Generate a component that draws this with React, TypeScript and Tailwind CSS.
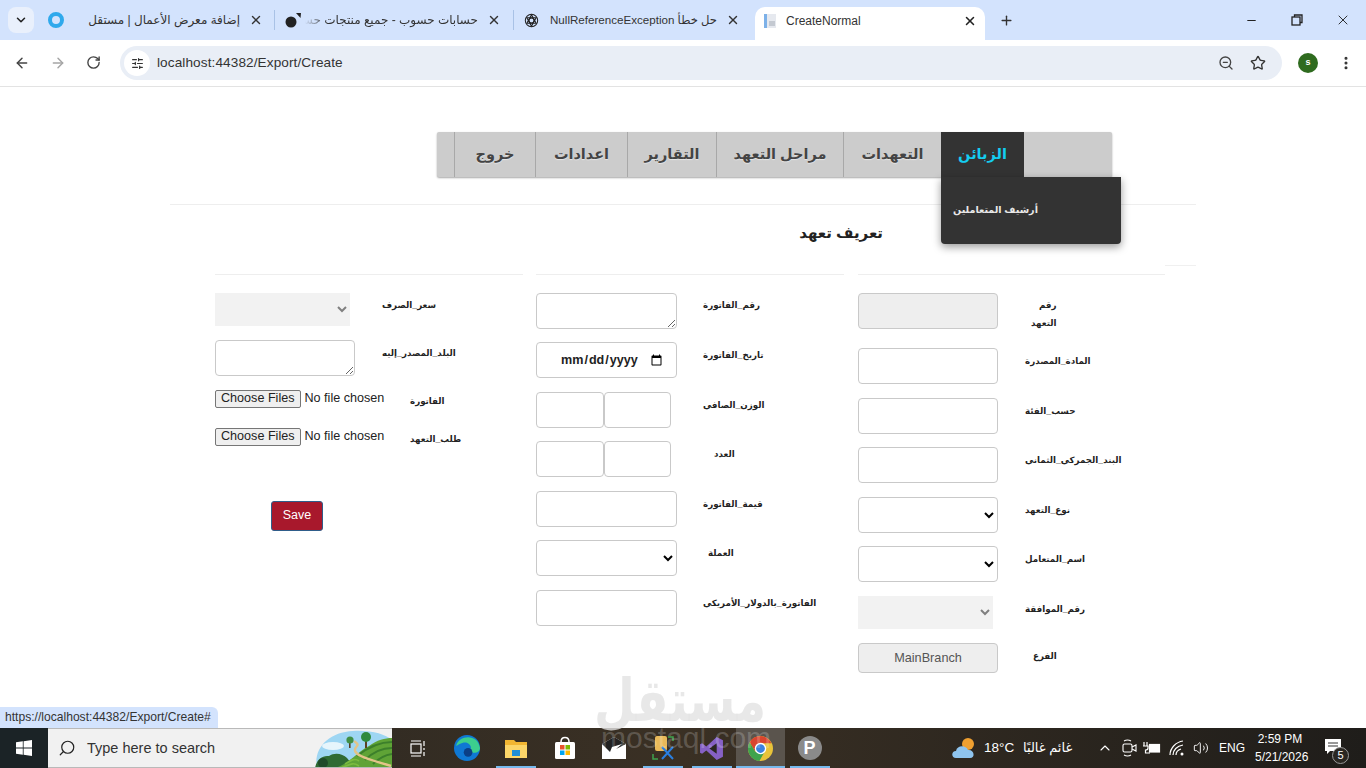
import type { ReactNode } from "react";
import {
  ArrowLeft,
  ArrowRight,
  ChevronDown,
  ChevronUp,
  EllipsisVertical,
  Minus,
  Plus,
  RotateCw,
  Search,
  SlidersHorizontal,
  Star,
  Volume2,
  X,
  ZoomOut,
} from "lucide-react";

const inputCls = "block h-[36px] border border-[#c9c9c9] rounded-[4px] bg-white";
const labelCls = "text-[8.7px] font-bold text-[#222] leading-[18px] whitespace-nowrap";

function Tab({ title, icon, iconCls, closeCls, widthCls, titleCls }: {
  title: string;
  icon: ReactNode;
  iconCls: string;
  closeCls: string;
  widthCls: string;
  titleCls?: string;
}) {
  return (
    <div className={`flex items-center h-[40px] ${widthCls}`}>
      <div className={`w-[19px] flex justify-center shrink-0 ${iconCls}`}>{icon}</div>
      <div dir="rtl" className={`flex-1 min-w-0 overflow-hidden whitespace-nowrap text-[#333] mr-[9px] ${titleCls ?? "text-[12px]"}`}>
        {title}
      </div>
      <X className={`w-[14px] h-[14px] text-[#333] shrink-0 ${closeCls}`} strokeWidth={2.4} />
    </div>
  );
}

function BrowserChrome() {
  return (
    <div className="shrink-0">
      {/* Tab strip */}
      <div className="h-[40px] bg-[#d3e3fd] flex items-center">
        <div className="ml-[8px] w-[26px] h-[26px] rounded-[8px] bg-[#e9f0fc] flex items-center justify-center">
          <ChevronDown className="w-[14px] h-[14px] text-[#222]" strokeWidth={2.6} />
        </div>
        <div className="ml-[10px] flex items-center">
          <Tab
            widthCls="w-[230px]"
            iconCls="ml-[2px]"
            closeCls="mr-[11px]"
            title="إضافة معرض الأعمال | مستقل"
            icon={<div className="w-[16px] h-[16px] rounded-full border-[4px] border-[#2fa9ec]" />}
          />
          <div className="w-px h-[20px] bg-[#a9c2e6]" />
          <Tab
            widthCls="w-[238px]"
            iconCls="ml-[8px]"
            closeCls="mr-[12px]"
            titleCls="text-[12px] ml-[3px] [mask-image:linear-gradient(to_right,transparent,black_22px)]"
            title="حسابات حسوب - جميع منتجات حسوب"
            icon={
              <svg viewBox="0 0 18 18" className="w-[18px] h-[18px]">
                <circle cx="7" cy="11" r="5.5" fill="#222" />
                <path d="M12 2 L17 2 L16.5 7 Z" fill="#222" />
              </svg>
            }
          />
          <div className="w-px h-[20px] bg-[#a9c2e6]" />
          <Tab
            widthCls="w-[241px]"
            iconCls="ml-[8px]"
            closeCls="mr-[15px]"
            titleCls="text-[11.6px]"
            title="حل خطأ NullReferenceException"
            icon={
              <svg viewBox="0 0 16 16" className="w-[15px] h-[15px]" fill="none" stroke="#222" strokeWidth="1.1">
                <circle cx="8" cy="8" r="6.6" />
                <path d="M8 2 L13 11 L3 11 Z M8 14 L3 5 L13 5 Z" />
                <circle cx="8" cy="8" r="2.6" />
              </svg>
            }
          />
        </div>
        {/* Active tab */}
        <div className="mt-[7px] pb-[6px] w-[230px] h-[33px] bg-white rounded-t-[10px] flex items-center">
          <svg viewBox="0 0 16 16" className="ml-[7px] w-[16px] h-[16px]">
            <rect x="2" y="1" width="12" height="14" fill="#e6e9ef" />
            <rect x="2" y="1" width="3" height="14" fill="#7db1e8" />
            <rect x="7" y="8" width="6" height="5" fill="#c4c9d1" />
          </svg>
          <span className="ml-[8px] text-[12px] text-[#333] flex-1">CreateNormal</span>
          <X className="mr-[8px] w-[14px] h-[14px] text-[#222]" strokeWidth={2.6} />
        </div>
        <Plus className="ml-[14px] w-[15px] h-[15px] text-[#333]" strokeWidth={2.2} />
        <div className="ml-auto flex items-center">
          <Minus className="w-[13px] h-[13px] text-[#222] mr-[33px]" />
          <svg viewBox="0 0 12 12" className="w-[12px] h-[12px] mr-[32px]" fill="none" stroke="#222" strokeWidth="1.3">
            <rect x="1" y="3" width="8" height="8" />
            <path d="M3.5 3 V1 H11 V8.5 H9" />
          </svg>
          <X className="w-[16px] h-[16px] text-[#222] mr-[15px]" strokeWidth={1.4} />
        </div>
      </div>
      {/* Toolbar */}
      <div className="h-[47px] bg-white border-b border-[#e3e3e3] flex items-start pt-[6px]">
        <ArrowLeft className="ml-[14px] mt-[9px] w-[16px] h-[16px] text-[#444]" strokeWidth={2.2} />
        <ArrowRight className="ml-[20px] mt-[9px] w-[16px] h-[16px] text-[#a5a5a5]" strokeWidth={2.2} />
        <RotateCw className="ml-[20px] mt-[9px] w-[15px] h-[15px] text-[#444]" strokeWidth={2.2} />
        <div className="ml-[19px] w-[1162px] h-[34px] rounded-full bg-[#e9eef6] flex items-center">
          <div className="ml-[4px] w-[26px] h-[26px] rounded-full bg-white flex items-center justify-center">
            <SlidersHorizontal className="w-[13px] h-[13px] text-[#333]" strokeWidth={2.2} />
          </div>
          <span className="ml-[7px] mt-[1px] text-[13.6px] text-[#333] tracking-[0.1px]">localhost:44382/Export/Create</span>
          <ZoomOut className="ml-auto w-[16px] h-[16px] text-[#444]" strokeWidth={2} />
          <Star className="ml-[16px] mr-[16px] w-[16px] h-[16px] text-[#333]" strokeWidth={2} />
        </div>
        <div className="ml-[16px] mt-[7px] w-[20px] h-[20px] rounded-full bg-[#2f6b1f] text-white text-[9px] font-bold flex items-center justify-center">
          s
        </div>
        <EllipsisVertical className="ml-[20px] mt-[9px] w-[16px] h-[16px] text-[#333]" strokeWidth={2.6} />
      </div>
    </div>
  );
}

const navItems = [
  { label: "خروج", w: "w-[81px]" },
  { label: "اعدادات", w: "w-[92px]" },
  { label: "التقارير", w: "w-[89px]" },
  { label: "مراحل التعهد", w: "w-[127px]" },
  { label: "التعهدات", w: "w-[98px]" },
];

function NavBar() {
  return (
    <div className="ml-[437px] w-[675px] h-[45px] bg-[#cccccc] rounded-[2px] shadow-[0_1px_2px_rgba(0,0,0,0.35)] flex pl-[17px]">
      {navItems.map((item) => (
        <div
          key={item.label}
          dir="rtl"
          className={`${item.w} h-full border-l border-[#a8a8a8] flex items-center justify-center text-[14.5px] font-bold text-[#444] [text-shadow:0_1px_1px_rgba(255,255,255,0.5)]`}
        >
          {item.label}
        </div>
      ))}
      <div className="relative w-[83px] h-full bg-[#333333] flex items-center justify-center text-[14.5px] font-bold text-[#14cdf0]" dir="rtl">
        الزبائن
        <div
          dir="ltr"
          className="absolute left-0 top-[45px] w-[180px] h-[67px] bg-[#333333] rounded-b-[4px] shadow-[0_3px_8px_rgba(0,0,0,0.4)] flex items-center pl-[12px] z-10"
        >
          <span dir="rtl" className="text-[9.6px] font-bold text-[#e8e8e8]">أرشيف المتعاملين</span>
        </div>
      </div>
    </div>
  );
}

function Row({ gapCls, heightCls, fieldCls, labelPad, label, children }: {
  gapCls: string;
  heightCls?: string;
  fieldCls?: string;
  labelPad?: string;
  label: ReactNode;
  children: ReactNode;
}) {
  return (
    <div className={`flex ${gapCls} ${heightCls ?? "h-[36px]"}`}>
      <div className={`shrink-0 ${fieldCls ?? "w-[167px]"}`}>{children}</div>
      <div dir="rtl" className={`${labelCls} ${labelPad ?? "mt-[4px]"}`}>{label}</div>
    </div>
  );
}

const fileCls =
  "block w-[195px] text-[12.6px] text-[#222] leading-[18px] file:h-[18px] file:px-[5px] file:mr-[4px] file:bg-[#efefef] file:border file:border-[#767676] file:rounded-[2px] file:text-[12.6px] file:leading-[15px]";

function FormColumns() {
  return (
    <div className="flex pl-[215px] mt-[8px]">
      {/* Left column */}
      <div className="w-[308px] border-t border-[#eeeeee] pt-[18px]">
        <Row gapCls="" heightCls="h-[33px]" labelPad="mt-[3px]" label="سعر_الصرف">
          <select disabled className="block w-[135px] h-[33px] bg-[#f2f2f2] text-[#808080]" />
        </Row>
        <Row gapCls="mt-[14px]" label="البلد_المصدر_إليه">
          <textarea className={`${inputCls} w-[140px]`} />
        </Row>
        <Row gapCls="mt-[13px]" heightCls="h-[18px]" fieldCls="w-[195px]" labelPad="mt-[3px]" label="الفاتورة">
          <input type="file" multiple className={fileCls} />
        </Row>
        <Row gapCls="mt-[20px]" heightCls="h-[18px]" fieldCls="w-[195px]" labelPad="mt-[3px]" label="طلب_التعهد">
          <input type="file" multiple className={fileCls} />
        </Row>
        <button className="block ml-[56px] mt-[56px] pb-[2px] w-[52px] h-[30px] bg-[#a8182c] border border-[#2f5d8a] rounded-[3px] text-white text-[12.5px]">
          Save
        </button>
      </div>
      {/* Middle column */}
      <div className="ml-[13px] w-[308px] border-t border-[#eeeeee] pt-[18px]">
        <Row gapCls="" labelPad="mt-[3px]" label="رقم_الفاتورة">
          <textarea className={`${inputCls} w-[141px]`} />
        </Row>
        <Row gapCls="mt-[13px]" label="تاريخ_الفاتورة">
          <input type="date" className={`${inputCls} w-[141px] pl-[23px] pr-[11px] pt-[1px] text-[12.6px] font-bold text-[#222]`} />
        </Row>
        <Row gapCls="mt-[14px]" label="الوزن_الصافي">
          <div className="flex">
            <input className={`${inputCls} w-[68px]`} />
            <input className={`${inputCls} w-[67px]`} />
          </div>
        </Row>
        <Row gapCls="mt-[13px]" labelPad="mt-[4px] pl-[11px]" label="العدد">
          <div className="flex">
            <input className={`${inputCls} w-[68px]`} />
            <input className={`${inputCls} w-[67px]`} />
          </div>
        </Row>
        <Row gapCls="mt-[14px]" label="قيمة_الفاتورة">
          <input className={`${inputCls} w-[141px]`} />
        </Row>
        <Row gapCls="mt-[13px]" labelPad="mt-[4px] pl-[5px]" label="العملة">
          <select className={`${inputCls} w-[141px]`} />
        </Row>
        <Row gapCls="mt-[14px]" label="الفاتورة_بالدولار_الأمريكي">
          <input className={`${inputCls} w-[141px]`} />
        </Row>
      </div>
      {/* Right column */}
      <div className="ml-[14px] w-[307px] border-t border-[#eeeeee] pt-[18px]">
        <Row
          gapCls=""
          labelPad="mt-[3px] pl-[6px]"
          label={
            <>
              رقم
              <br />
              التعهد
            </>
          }
        >
          <input disabled className={`${inputCls} w-[140px] !bg-[#eeeeee]`} />
        </Row>
        <Row gapCls="mt-[19px]" label="المادة_المصدرة">
          <input className={`${inputCls} w-[140px]`} />
        </Row>
        <Row gapCls="mt-[14px]" label="حسب_الفئة">
          <input className={`${inputCls} w-[140px]`} />
        </Row>
        <Row gapCls="mt-[13px]" label="البند_الجمركي_الثماني">
          <input className={`${inputCls} w-[140px]`} />
        </Row>
        <Row gapCls="mt-[14px]" label="نوع_التعهد">
          <select className={`${inputCls} w-[140px]`} />
        </Row>
        <Row gapCls="mt-[13px]" label="اسم_المتعامل">
          <select className={`${inputCls} w-[140px]`} />
        </Row>
        <Row gapCls="mt-[14px]" heightCls="h-[33px]" label="رقم_الموافقة">
          <select disabled className="block w-[135px] h-[33px] bg-[#f2f2f2] text-[#808080]" />
        </Row>
        <Row gapCls="mt-[14px]" heightCls="h-[30px]" labelPad="mt-[4px] pl-[8px]" label="الفرع">
          <div className="w-[140px] h-[30px] pt-[1px] border border-[#c9c9c9] rounded-[4px] bg-[#eeeeee] flex items-center justify-center text-[12.7px] text-[#555]">
            MainBranch
          </div>
        </Row>
      </div>
    </div>
  );
}

function Page() {
  return (
    <div className="relative flex-1 bg-white pt-[45px] overflow-hidden">
      <NavBar />
      <div className="ml-[170px] mt-[27px] w-[1026px] border-t border-[#eeeeee]" />
      <div dir="rtl" className="ml-[700px] mt-[16px] w-[183px] h-[24px] text-[15px] font-bold leading-[24px] text-[#222]">
        تعريف تعهد
      </div>
      <div className="ml-[1165px] mt-[20px] w-[31px] border-t border-[#f0f0f0]" />
      <FormColumns />
      <div className="absolute left-0 bottom-0 h-[21px] pl-[5px] pr-[7px] bg-[#d3e3fd] rounded-tr-[6px] text-[12.1px] leading-[21px] text-[#333]">
        https://localhost:44382/Export/Create#
      </div>
    </div>
  );
}

function Landscape() {
  return (
    <svg viewBox="0 0 77 40" className="w-[77px] h-[40px]">
      <path d="M2 40 C-2 20 14 4 38 3 C56 2 70 6 77 12 V40 Z" fill="#9ed6f3" />
      <ellipse cx="18" cy="18" rx="11" ry="4" fill="#e6f5fc" />
      <path d="M0 40 C2 30 8 28 14 28 C20 24 28 26 32 30 L40 40 Z" fill="#2f6b33" />
      <path d="M20 40 C34 36 42 24 54 18 C62 12 70 10 77 10 V40 Z" fill="#5fa336" />
      <path d="M42 28 C52 20 64 14 77 14 M50 32 C58 24 68 20 77 20 M58 36 C64 30 70 27 77 26" fill="none" stroke="#3c7f2b" strokeWidth="2" />
      <path d="M26 40 C36 36 38 34 44 38 M30 36 C36 32 40 30 44 33" fill="none" stroke="#7cbb3f" strokeWidth="1.6" />
      <path d="M76 38 C64 34 54 32 46 28 C40 25 38 22 42 18 C44 16 40 14 39 13" fill="none" stroke="#e2c489" strokeWidth="2.4" />
      <rect x="50" y="12" width="2" height="8" fill="#5b4124" />
      <circle cx="51" cy="9" r="5" fill="#2f8a3e" />
      <rect x="34" y="14" width="1.6" height="6" fill="#5b4124" />
      <circle cx="35" cy="12" r="3.6" fill="#3f8f45" />
      <circle cx="8" cy="35" r="5" fill="#1f4a2a" />
    </svg>
  );
}

function TaskIcon({ children, underline, active }: { children: ReactNode; underline?: boolean; active?: boolean }) {
  return (
    <div className={`relative w-[49px] h-full flex items-center justify-center ${active ? "bg-[#5a544d]" : ""}`}>
      {children}
      {underline && (
        <div className={`absolute bottom-0 h-[2px] bg-[#76b9ed] ${active ? "left-0 right-0" : "left-[5px] right-[4px]"}`} />
      )}
    </div>
  );
}

function Taskbar() {
  return (
    <div className="relative shrink-0 h-[40px] bg-gradient-to-r from-[#2a2722] via-[#3a3024] to-[#1f1d1a] flex items-center text-white">
      <div className="w-[48px] h-full bg-[#1b2326] flex items-center justify-center">
        <svg viewBox="0 0 16 16" className="w-[16px] h-[16px]" fill="#fff">
          <path d="M0 2.3 L6.8 1.3 V7.6 H0 Z M7.6 1.2 L16 0 V7.6 H7.6 Z M0 8.4 H6.8 V14.7 L0 13.7 Z M7.6 8.4 H16 V16 L7.6 14.8 Z" />
        </svg>
      </div>
      <div className="w-[344px] h-full bg-[#f1f1f1] border-y border-[#b9b9b9] flex items-center overflow-hidden">
        <Search className="ml-[10px] w-[18px] h-[18px] text-[#222] -scale-x-100" strokeWidth={1.6} />
        <span className="ml-[11px] mt-[1px] text-[14.5px] text-[#333]">Type here to search</span>
        <div className="ml-auto">
          <Landscape />
        </div>
      </div>
      <div className="ml-[18px] w-[17px] flex justify-center">
        <svg viewBox="0 0 17 17" className="w-[17px] h-[17px]" fill="none" stroke="#fff" strokeWidth="1.2">
          <path d="M1 1 H11 M1 16 H11" />
          <rect x="1" y="4" width="10" height="9" />
          <path d="M14 1 V6 M14 8 V10 M14 12 V16" />
        </svg>
      </div>
      <div className="ml-[15px] flex h-full items-center">
        <TaskIcon>
          <svg viewBox="0 0 24 24" className="w-[26px] h-[26px]">
            <circle cx="12" cy="12" r="12" fill="#0f78d4" />
            <path d="M2 10 C4 0 22 -2 24 12 C24 17 16 18 14 14 C18 12 14 6 9 7 C5 8 3 10 2 10 Z" fill="#3ccf8e" />
            <circle cx="13" cy="16" r="4" fill="#0b3f86" />
          </svg>
        </TaskIcon>
        <TaskIcon underline>
          <svg viewBox="0 0 24 24" className="w-[24px] h-[24px]">
            <path d="M1 4 H10 L12 6 H23 V22 H1 Z" fill="#f2b632" />
            <rect x="1" y="9" width="22" height="13" fill="#fcd669" />
            <rect x="8" y="14" width="8" height="6" fill="#1f8ed6" />
          </svg>
        </TaskIcon>
        <TaskIcon>
          <svg viewBox="0 0 24 24" className="w-[24px] h-[24px]">
            <path d="M8 6 C8 0 16 0 16 6" fill="none" stroke="#fff" strokeWidth="1.5" />
            <rect x="2" y="6" width="20" height="17" rx="1.5" fill="#fff" />
            <rect x="7" y="9" width="4.5" height="4.5" fill="#e8532c" />
            <rect x="12.5" y="9" width="4.5" height="4.5" fill="#7fba00" />
            <rect x="7" y="14.5" width="4.5" height="4.5" fill="#00a4ef" />
            <rect x="12.5" y="14.5" width="4.5" height="4.5" fill="#ffb900" />
          </svg>
        </TaskIcon>
        <TaskIcon>
          <svg viewBox="0 0 24 24" className="w-[24px] h-[24px]">
            <path d="M0 8 L12 1 L24 8 V23 H0 Z" fill="#fff" />
            <path d="M0 8 L12 1 L24 8 L14 13 L20 8 L10 11 L8 16 Z" fill="#222" />
          </svg>
        </TaskIcon>
        <TaskIcon underline>
          <svg viewBox="0 0 24 24" className="w-[24px] h-[24px]">
            <rect x="4" y="0" width="12" height="15" rx="2" fill="#e9b95a" />
            <path d="M2 18 V23 H7 M17 1 H22 V5" fill="none" stroke="#3fa34d" strokeWidth="1.5" />
            <path d="M11 11 L22 23 M22 11 L11 23" stroke="#2a7fe0" strokeWidth="2" />
          </svg>
        </TaskIcon>
        <TaskIcon underline>
          <svg viewBox="0 0 24 24" className="w-[25px] h-[25px]">
            <path d="M17 1 L23 4 V20 L17 23 L7 14 L3 17 L1 16 V8 L3 7 L7 10 Z" fill="#8661c5" />
            <path d="M17 7 V17 L10 12 Z" fill="#2a2722" />
          </svg>
        </TaskIcon>
        <TaskIcon underline active>
          <svg viewBox="0 0 24 24" className="w-[25px] h-[25px]">
            <circle cx="12" cy="12" r="12" fill="#e8c33a" />
            <path d="M12 0 A12 12 0 0 0 1.6 6 L7 15 L12 7 H22.4 A12 12 0 0 0 12 0 Z" fill="#d9452f" />
            <path d="M1.6 6 A12 12 0 0 0 11 24 L16 15 L7 15 Z" fill="#3fa34d" />
            <circle cx="12" cy="12" r="5.5" fill="#fff" />
            <circle cx="12" cy="12" r="4.2" fill="#3b82e0" />
          </svg>
        </TaskIcon>
        <TaskIcon underline>
          <div className="w-[24px] h-[24px] rounded-full bg-[#8a8a8a] flex items-center justify-center text-[18px] font-bold text-white leading-none">
            P
          </div>
        </TaskIcon>
      </div>
      <svg viewBox="0 0 26 24" className="absolute left-[951px] top-[8px] w-[26px] h-[24px]">
        <circle cx="17" cy="8" r="6" fill="#f0a030" />
        <path d="M5 22 C0 22 0 15 5 15 C6 9 15 9 17 14 C23 13 25 22 19 22 Z" fill="#8fc4ee" />
      </svg>
      <span className="absolute left-[984px] top-[11px] text-[13.5px] leading-[18px]">18°C</span>
      <span dir="rtl" className="absolute left-[1023px] top-[11px] text-[13px] leading-[18px]">غائم غالبًا</span>
      <ChevronUp className="absolute left-[1097px] top-[12px] w-[16px] h-[16px]" strokeWidth={1.6} />
      <svg viewBox="0 0 16 20" className="absolute left-[1121px] top-[10px] w-[16px] h-[20px]" fill="none" stroke="#fff" strokeWidth="1.1">
        <rect x="2" y="6" width="9" height="8" rx="1.5" />
        <path d="M11 9 L15 7 V13 L11 11" />
        <path d="M3 3 Q6.5 1 10 3 M3 17 Q6.5 19 10 17" />
      </svg>
      <svg viewBox="0 0 18 14" className="absolute left-[1143px] top-[13px] w-[18px] h-[14px]" fill="none" stroke="#fff" strokeWidth="1.2">
        <path d="M1 1 V5 M4 1 V5 M0 5 H5 V7 Q5 9 2.5 9 V12 H7" />
        <rect x="6.5" y="3.5" width="10" height="7.5" fill="#fff" />
      </svg>
      <svg viewBox="0 0 16 16" className="absolute left-[1169px] top-[12px] w-[16px] h-[16px]" fill="none" stroke="#fff" strokeWidth="1.2">
        <path d="M1 15 C1 8 7 2 14 1 M4 15 C4 10 8 6 14 5 M7 15 C7 12 9 10 12 9" />
        <circle cx="13" cy="14" r="1.5" fill="#fff" stroke="none" />
      </svg>
      <Volume2 className="absolute left-[1193px] top-[12px] w-[16px] h-[16px]" strokeWidth={1.4} />
      <span className="absolute left-[1219px] top-[11px] text-[12px] leading-[18px]">ENG</span>
      <div className="absolute left-[1255px] top-[2px] w-[50px] text-center text-[12px] leading-[18px]">
        2:59 PM
        <br />
        5/21/2026
      </div>
      <svg viewBox="0 0 16 16" className="absolute left-[1325px] top-[11px] w-[16px] h-[16px]">
        <path d="M0 0 H16 V12 H5 L2 15 V12 H0 Z" fill="#fff" />
        <path d="M3 4 H13 M3 7 H13" stroke="#333" strokeWidth="1" />
      </svg>
      <div className="absolute left-[1332px] top-[19px] w-[17px] h-[17px] rounded-full border border-[#999] bg-[#2a2722] text-[11px] leading-[15px] text-center">
        5
      </div>
    </div>
  );
}

export default function App() {
  return (
    <div className="relative w-[1366px] h-[768px] overflow-hidden flex flex-col font-['Liberation_Sans','DejaVu_Sans',sans-serif]">
      <BrowserChrome />
      <Page />
      <Taskbar />
      {/* Site watermark */}
      <div dir="rtl" className="absolute left-[600px] top-[671px] w-[166px] text-center text-[47px] font-bold leading-[60px] text-[#e2e2e2]/80 scale-y-125 pointer-events-none">
        مستقل
      </div>
      <div className="absolute left-[601px] top-[723px] text-[30px] leading-[30px] text-white/20 pointer-events-none">
        mostaql.com
      </div>
    </div>
  );
}
